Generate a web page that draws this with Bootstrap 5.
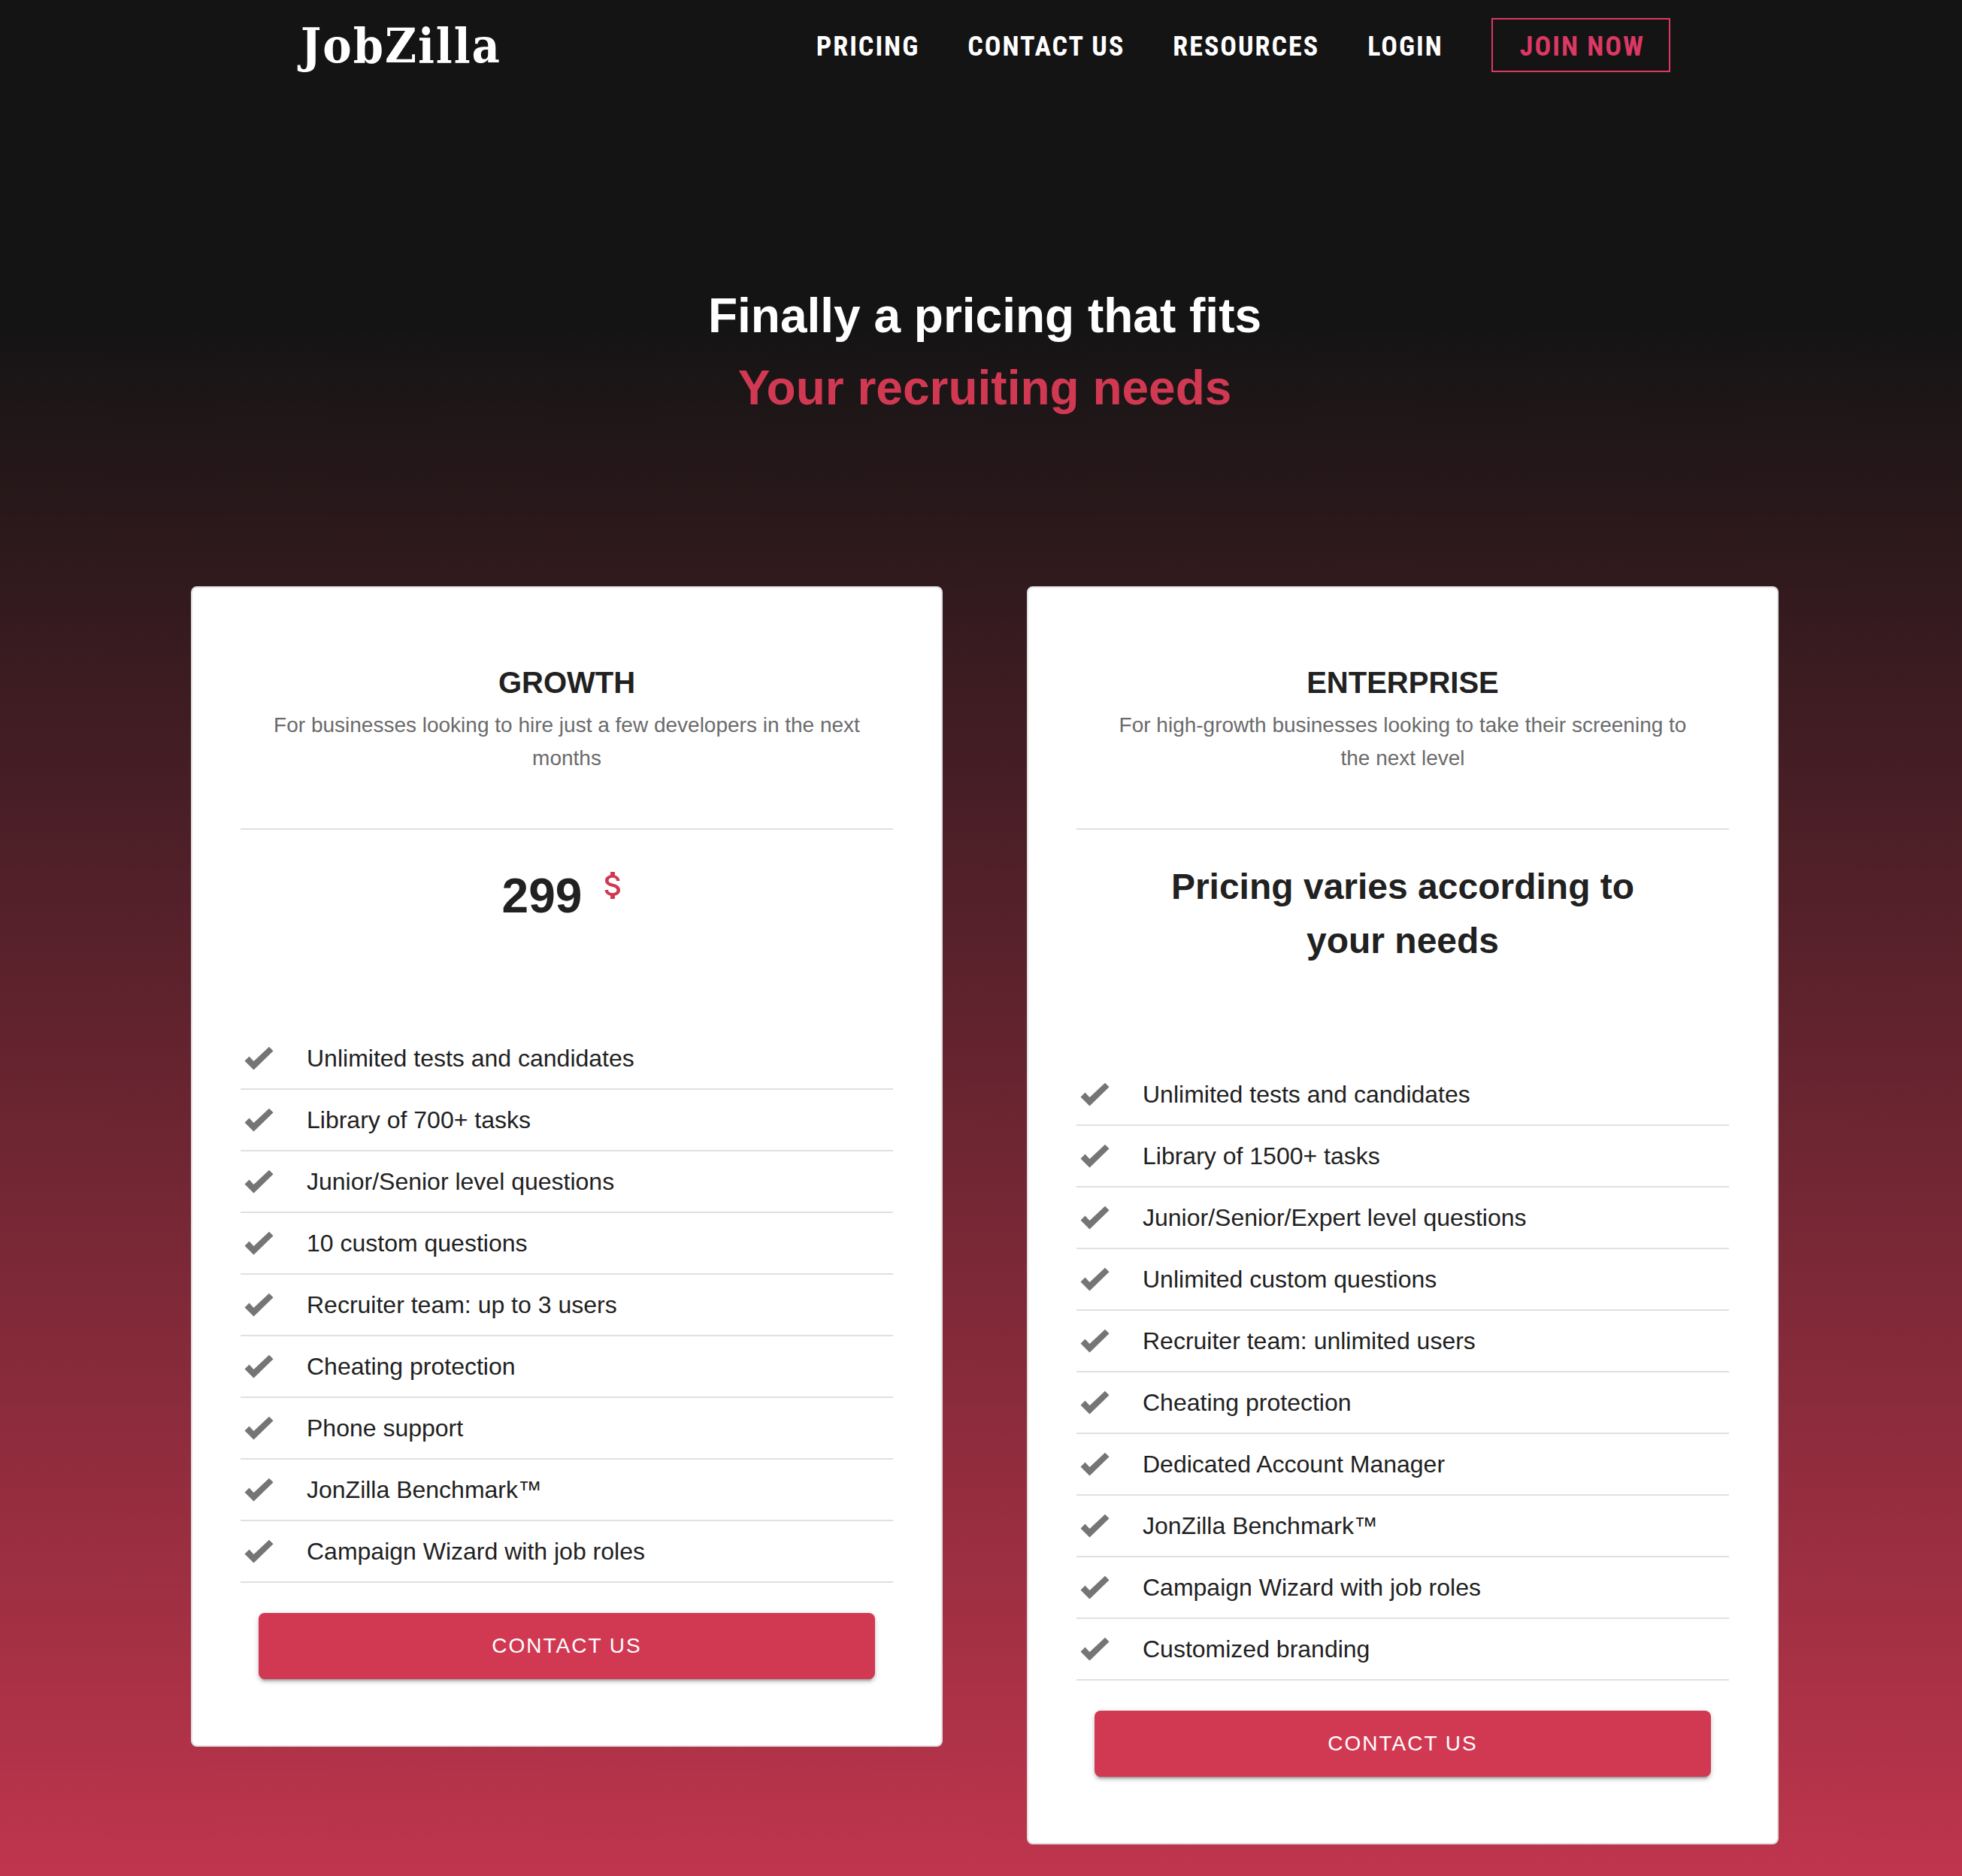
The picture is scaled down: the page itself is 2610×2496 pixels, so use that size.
<!DOCTYPE html>
<html lang="en">
<head>
<meta charset="utf-8">
<meta name="viewport" content="width=device-width, initial-scale=1">
<title>JobZilla – Pricing</title>
<link href="https://cdn.jsdelivr.net/npm/bootstrap@5.3.0/dist/css/bootstrap.min.css" rel="stylesheet">
<style>
  body { font-family: "Liberation Sans", Arial, sans-serif; color: #212121; background: #141414; }
  .page { min-height: 100vh; padding-left: 10px; padding-bottom: 42px; background: linear-gradient(#141414 17%, #d13953 109%); }
  .site-nav { max-width: 1824px; min-height: 120px; }
  .logo { font-family: "Roboto Slab", "DejaVu Serif Condensed", "DejaVu Serif", serif; font-weight: 700; font-size: 64px; line-height: 72px; letter-spacing: 2px; padding: 2px 0 0 2px; }
  .menu { column-gap: 64px; }
  .menu a { font-family: "Roboto Condensed", Roboto, sans-serif; font-weight: 700; font-size: 36px; line-height: 44px; letter-spacing: 2px; padding-top: 4px; }
  .menu .join { color: #dc3864; border: 2px solid #dc3864; border-radius: 0; padding: 14px 32px 10px 36px; }
  .hero { padding: 252px 0 216px; }
  .hero h1 { font-size: 64px; line-height: 96px; font-weight: 700; }
  .accent { color: #d13953; }
  .plans { max-width: 2224px; padding: 0 56px; }
  .plans > .row { --bs-gutter-x: 112px; --bs-gutter-y: 56px; }
  .plan { border: 2px solid #e0e0e0; border-radius: 8px; padding: 94px 64px 88px; color: #212121; }
  .plan h2 { font-size: 40px; line-height: 64px; font-weight: 700; }
  .plan .intro { font-size: 28px; line-height: 44px; color: #6b6b6b; padding: 3px 36px 71px; border-bottom: 2px solid #e0e0e0; }
  .price { padding: 40px 0 128px; font-weight: 700; }
  .amount { font-size: 64px; line-height: 96px; gap: 18px; }
  .amount svg { width: 48px; height: 48px; margin-top: 10px; }
  .varies { font-size: 48px; line-height: 72px; padding: 0 96px; }
  .features li { font-size: 32px; line-height: 48px; padding: 16px 4px; border-bottom: 2px solid #e0e0e0; gap: 44px; }
  .features svg { width: 40px; height: 32px; flex: none; }
  .contact { margin: 40px 24px 0; height: 88px; border: 0; border-radius: 8px; background: #d13953; color: #fff; font-size: 28px; letter-spacing: 2px;
    box-shadow: 0 6px 2px -4px rgba(0,0,0,.2), 0 4px 4px rgba(0,0,0,.14), 0 2px 10px rgba(0,0,0,.12); }
  .contact:hover { background: #b8304a; color: #fff; }
</style>
</head>
<body>
<svg class="d-none" aria-hidden="true">
  <symbol id="tick" viewBox="0 0 40 32"><path fill="#757575" d="M1.5 19.5 7.5 13.5 13.5 20 34 .8 39.5 6.3 13.5 31.5Z"/></symbol>
</svg>
<div class="page">
  <header>
    <nav class="site-nav mx-auto d-flex flex-wrap align-items-center justify-content-between" aria-label="Main">
      <a class="logo text-white text-decoration-none" href="#">JobZilla</a>
      <div class="menu d-flex flex-wrap align-items-center">
        <a class="text-white text-decoration-none" href="#">PRICING</a>
        <a class="text-white text-decoration-none" href="#">CONTACT US</a>
        <a class="text-white text-decoration-none" href="#">RESOURCES</a>
        <a class="text-white text-decoration-none" href="#">LOGIN</a>
        <a class="btn join" href="#">JOIN NOW</a>
      </div>
    </nav>
  </header>
  <main>
    <section class="hero text-center">
      <h1 class="m-0 text-white">Finally a pricing that fits<br><span class="accent">Your recruiting needs</span></h1>
    </section>
    <section class="plans mx-auto">
      <div class="row align-items-start">
        <div class="col-12 col-xl-6">
          <article class="card plan">
            <h2 class="m-0 text-center">GROWTH</h2>
            <p class="intro m-0 text-center">For businesses looking to hire just a few developers in the next months</p>
            <div class="price">
              <div class="amount d-flex justify-content-center align-items-start">299
                <svg viewBox="0 0 24 24" role="img" aria-label="dollars"><path fill="#d13953" d="M11.8 10.9c-2.27-.59-3-1.2-3-2.15 0-1.09 1.01-1.85 2.7-1.85 1.78 0 2.44.85 2.5 2.1h2.21c-.07-1.72-1.12-3.3-3.21-3.81V3h-3v2.16c-1.94.42-3.5 1.68-3.5 3.61 0 2.31 1.91 3.46 4.7 4.13 2.5.6 3 1.48 3 2.41 0 .69-.49 1.79-2.7 1.79-2.06 0-2.87-.92-2.98-2.1h-2.2c.12 2.19 1.76 3.42 3.68 3.83V21h3v-2.15c1.95-.37 3.5-1.5 3.5-3.55 0-2.84-2.43-3.81-4.7-4.4z"/></svg>
              </div>
            </div>
            <ul class="features list-unstyled m-0">
              <li class="d-flex align-items-center"><svg><use href="#tick"/></svg>Unlimited tests and candidates</li>
              <li class="d-flex align-items-center"><svg><use href="#tick"/></svg>Library of 700+ tasks</li>
              <li class="d-flex align-items-center"><svg><use href="#tick"/></svg>Junior/Senior level questions</li>
              <li class="d-flex align-items-center"><svg><use href="#tick"/></svg>10 custom questions</li>
              <li class="d-flex align-items-center"><svg><use href="#tick"/></svg>Recruiter team: up to 3 users</li>
              <li class="d-flex align-items-center"><svg><use href="#tick"/></svg>Cheating protection</li>
              <li class="d-flex align-items-center"><svg><use href="#tick"/></svg>Phone support</li>
              <li class="d-flex align-items-center"><svg><use href="#tick"/></svg>JonZilla Benchmark™</li>
              <li class="d-flex align-items-center"><svg><use href="#tick"/></svg>Campaign Wizard with job roles</li>
            </ul>
            <button type="button" class="btn contact">CONTACT US</button>
          </article>
        </div>
        <div class="col-12 col-xl-6">
          <article class="card plan">
            <h2 class="m-0 text-center">ENTERPRISE</h2>
            <p class="intro m-0 text-center">For high-growth businesses looking to take their screening to the next level</p>
            <div class="price">
              <div class="varies text-center">Pricing varies according to your needs</div>
            </div>
            <ul class="features list-unstyled m-0">
              <li class="d-flex align-items-center"><svg><use href="#tick"/></svg>Unlimited tests and candidates</li>
              <li class="d-flex align-items-center"><svg><use href="#tick"/></svg>Library of 1500+ tasks</li>
              <li class="d-flex align-items-center"><svg><use href="#tick"/></svg>Junior/Senior/Expert level questions</li>
              <li class="d-flex align-items-center"><svg><use href="#tick"/></svg>Unlimited custom questions</li>
              <li class="d-flex align-items-center"><svg><use href="#tick"/></svg>Recruiter team: unlimited users</li>
              <li class="d-flex align-items-center"><svg><use href="#tick"/></svg>Cheating protection</li>
              <li class="d-flex align-items-center"><svg><use href="#tick"/></svg>Dedicated Account Manager</li>
              <li class="d-flex align-items-center"><svg><use href="#tick"/></svg>JonZilla Benchmark™</li>
              <li class="d-flex align-items-center"><svg><use href="#tick"/></svg>Campaign Wizard with job roles</li>
              <li class="d-flex align-items-center"><svg><use href="#tick"/></svg>Customized branding</li>
            </ul>
            <button type="button" class="btn contact">CONTACT US</button>
          </article>
        </div>
      </div>
    </section>
  </main>
</div>
<script src="https://cdn.jsdelivr.net/npm/bootstrap@5.3.0/dist/js/bootstrap.bundle.min.js"></script>
</body>
</html>
